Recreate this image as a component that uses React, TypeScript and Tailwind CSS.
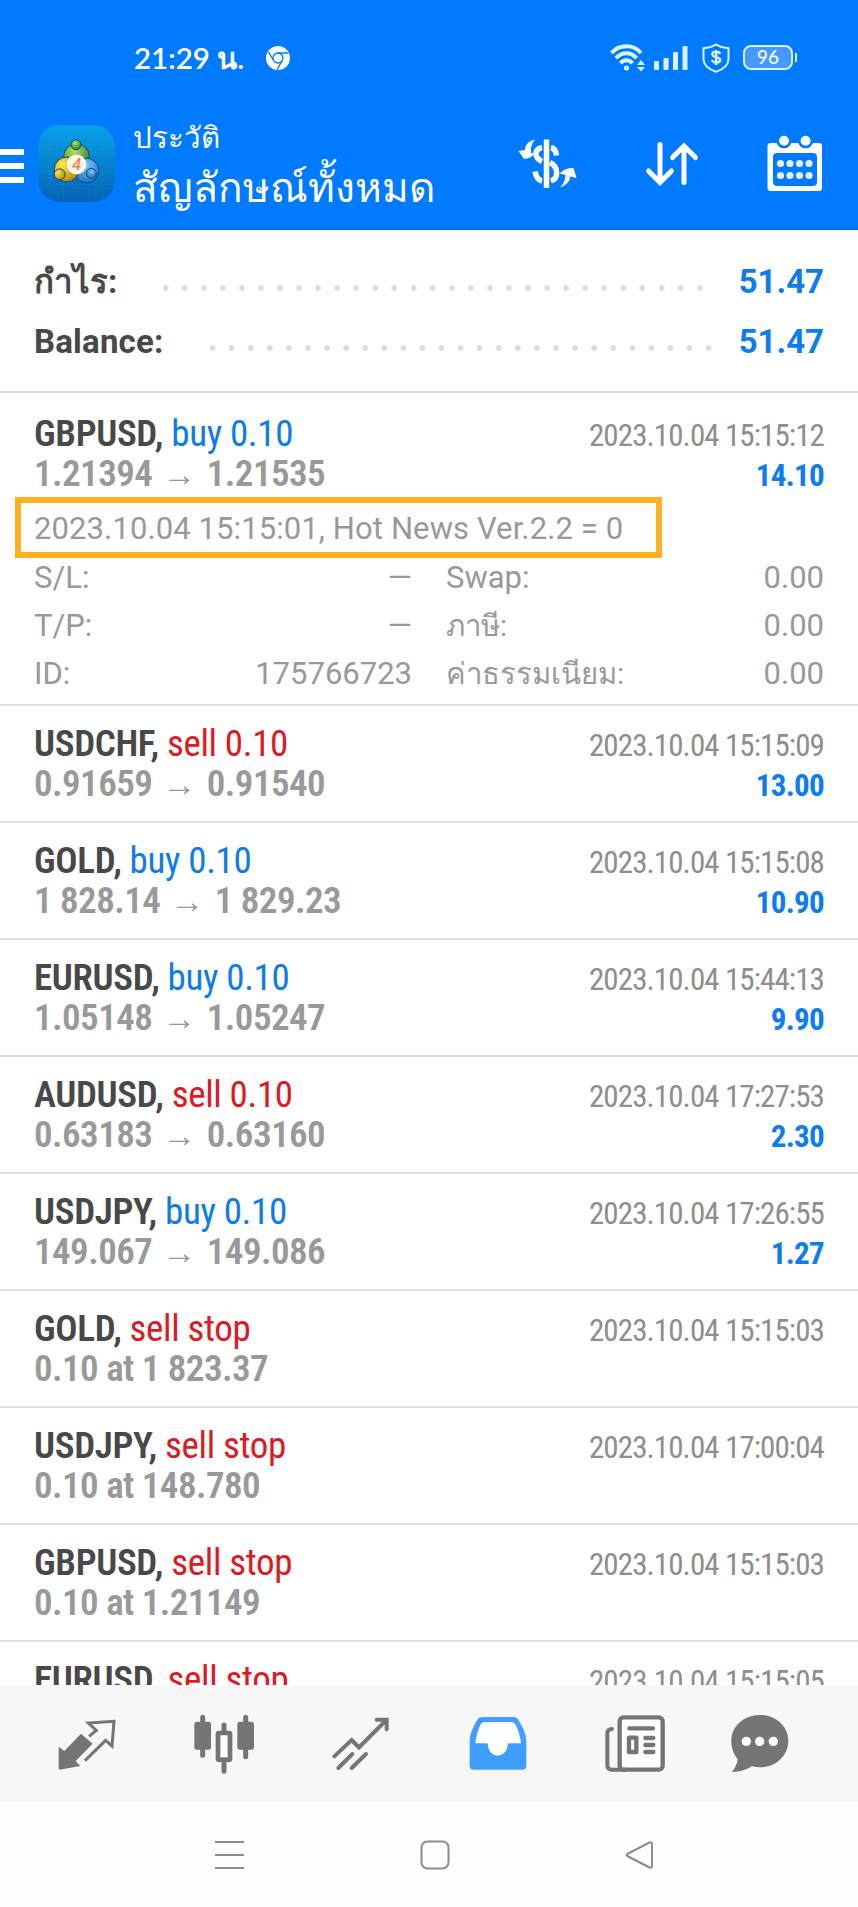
import React from "react";

type Deal = {
  symbol: string;
  side: string;
  sell?: boolean;
  from?: string;
  to?: string;
  time: string;
  profit?: string;
};

const deals: Deal[] = [
  { symbol: "USDCHF", side: "sell 0.10", sell: true, from: "0.91659", to: "0.91540", time: "2023.10.04 15:15:09", profit: "13.00" },
  { symbol: "GOLD", side: "buy 0.10", from: "1 828.14", to: "1 829.23", time: "2023.10.04 15:15:08", profit: "10.90" },
  { symbol: "EURUSD", side: "buy 0.10", from: "1.05148", to: "1.05247", time: "2023.10.04 15:44:13", profit: "9.90" },
  { symbol: "AUDUSD", side: "sell 0.10", sell: true, from: "0.63183", to: "0.63160", time: "2023.10.04 17:27:53", profit: "2.30" },
  { symbol: "USDJPY", side: "buy 0.10", from: "149.067", to: "149.086", time: "2023.10.04 17:26:55", profit: "1.27" },
  { symbol: "GOLD", side: "sell stop", sell: true, from: "0.10 at 1 823.37", time: "2023.10.04 15:15:03" },
  { symbol: "USDJPY", side: "sell stop", sell: true, from: "0.10 at 148.780", time: "2023.10.04 17:00:04" },
  { symbol: "GBPUSD", side: "sell stop", sell: true, from: "0.10 at 1.21149", time: "2023.10.04 15:15:03" },
  { symbol: "EURUSD", side: "sell stop", sell: true, time: "2023.10.04 15:15:05" },
];

const StatusBar = () => (
  <div className="flex h-[115px] items-center pl-[134px] pr-[61px] text-white">
    <span className="w-[110px] pt-0.5 font-['Lato',sans-serif] text-[29.5px] font-semibold whitespace-pre">21:29 น.</span>
    <svg className="ml-[22px]" width="24" height="24" viewBox="0 0 24 24">
      <circle cx="12" cy="12" r="12" fill="#fff" />
      <circle cx="12" cy="12" r="5" fill="#fff" stroke="#007aff" strokeWidth="1.3" />
      <path d="M12 7h10.5M7.7 14.5L2.3 5.6M16.3 14.5L11 23.6" stroke="#007aff" strokeWidth="1.3" />
    </svg>
    <svg className="ml-auto" width="36" height="28" viewBox="0 0 36 28" fill="none" stroke="#d9f4ff" strokeWidth="4">
      <path d="M1.5 9C9 0 24 0 31 9M6 14.2C11.5 7.5 21.5 7.5 26.5 14.2M10.5 19.3C13.5 15.2 19.5 15.2 22.5 19.3" />
      <circle cx="16.5" cy="24" r="2.6" fill="#d9f4ff" stroke="none" />
      <path d="M27 21l4-5 4 5zM27 23h8l-4 4.5z" fill="#d9f4ff" stroke="none" />
    </svg>
    <svg className="ml-2" width="34" height="24" viewBox="0 0 34 24" fill="#d9f4ff">
      <rect x="0" y="15" width="5" height="9" rx="1" />
      <rect x="9.5" y="12" width="5" height="12" rx="1" />
      <rect x="19" y="6" width="5" height="18" rx="1" />
      <rect x="28.5" y="0" width="5" height="24" rx="1" />
    </svg>
    <svg className="ml-3.5" width="28" height="30" viewBox="0 0 28 30" fill="none" stroke="#d9f4ff" strokeWidth="2">
      <path d="M14 1.5C18 4 22 5 26.5 5.3V16c0 6-6 10.5-12.5 12.8C7.5 26.5 1.5 22 1.5 16V5.3C6 5 10 4 14 1.5z" />
      <path d="M18 11c-.8-3-7.6-3-7.6.3 0 3.8 7.8 2 7.8 5.7 0 3.4-7.4 3.4-8.2 0M14.2 7v15" strokeWidth="2.4" />
    </svg>
    <div className="ml-[13px] flex h-[25px] w-[50px] items-center justify-center rounded-lg border-2 border-[#d9f4ff] bg-[#4598ff] font-['Lato',sans-serif] text-[19px] font-semibold text-[#eafaff]">
      96
    </div>
    <div className="ml-0.5 h-[9px] w-0.5 bg-[#d9f4ff]" />
  </div>
);

const AppLogo = () => (
  <svg className="ml-3.5 shrink-0" width="77" height="77" viewBox="0 0 78 78">
    <defs>
      <linearGradient id="tile" x1="0" y1="0" x2="0" y2="1">
        <stop offset="0" stopColor="#0aa0e8" />
        <stop offset="0.5" stopColor="#0583cf" />
        <stop offset="1" stopColor="#0562b4" />
      </linearGradient>
      <radialGradient id="green" cx=".4" cy=".3" r=".8">
        <stop offset="0" stopColor="#b4dc62" />
        <stop offset="1" stopColor="#1f7f28" />
      </radialGradient>
      <radialGradient id="gold" cx=".3" cy=".3" r=".8">
        <stop offset="0" stopColor="#ffe94a" />
        <stop offset="1" stopColor="#b3850c" />
      </radialGradient>
      <radialGradient id="sky" cx=".5" cy=".3" r=".8">
        <stop offset="0" stopColor="#7cc8fb" />
        <stop offset="1" stopColor="#1263b8" />
      </radialGradient>
    </defs>
    <rect width="78" height="78" rx="22" fill="url(#tile)" />
    <path d="M0 20h78M0 30h78M0 48h78M0 60h78M12 0v78M26 0v78M52 0v78M65 0v78" stroke="#2bb4ee" strokeOpacity=".15" />
    <g stroke="#12466b" strokeWidth="1">
      <circle cx="39" cy="32" r="13" fill="url(#green)" />
      <circle cx="49" cy="46" r="12.5" fill="url(#sky)" />
      <circle cx="29" cy="45" r="12.5" fill="url(#gold)" />
      <circle cx="38.5" cy="20" r="5" fill="url(#green)" />
      <circle cx="54" cy="49" r="5" fill="url(#sky)" />
      <circle cx="22" cy="50" r="5.5" fill="url(#gold)" />
    </g>
    <circle cx="39" cy="40" r="10" fill="#fff6ee" />
    <text x="39" y="46" textAnchor="middle" fontSize="17" fontStyle="italic" fontWeight="500" fontFamily="Roboto" fill="#f08a4b">
      4
    </text>
  </svg>
);

const Header = () => (
  <header className="h-[230px] border-b border-[#1558d6] bg-[#007aff]">
    <StatusBar />
    <div className="flex h-[97px] items-center text-white">
      <div className="flex w-6 flex-col gap-2 pt-1">
        <div className="h-[6px] bg-white" />
        <div className="h-[6px] bg-white" />
        <div className="h-[6px] bg-white" />
      </div>
      <AppLogo />
      <div className="ml-[18px] pt-[3px] font-['Roboto',sans-serif] whitespace-nowrap">
        <div className="text-[29.5px] leading-[46px]">ประวัติ</div>
        <div className="text-[40.6px] leading-[55px]">สัญลักษณ์ทั้งหมด</div>
      </div>
      <svg className="ml-auto" width="62" height="54" viewBox="519 137 62 54" fill="none" stroke="#fff" strokeWidth="5.5">
        <path d="M547.5 139.5V188" />
        <path d="M543 147.5C535 149.5 535 157.5 543 161.5M552 147.5C555.5 148.5 557 151 557.5 155.5M551 162.5C560 167 559.5 178.5 552 181M543 181C539 180 537 177 536 171.5" />
        <path
          d="M536 139.5C529 141 526 145.5 526 150L519.5 151l5.5 8c5-.5 8-2 10-5l-3-1.500c-.5-5 1-9.500 4-13zM561 187.5c7-2.5 10-6.5 10-11l6.5 1.5-3-10c-6 0-11 2-13.5 5.5l5.5 1.500c0 5-2 9-5.500 12.500z"
          fill="#fff"
          stroke="none"
        />
      </svg>
      <svg className="ml-[64px]" width="56" height="48" viewBox="644 140 56 48" fill="none" stroke="#fff" strokeWidth="5" strokeLinecap="round">
        <path d="M660 144.5V182M648.5 171l11.5 11.5L671.5 171M684 182.5V146M672.5 157.5l11.5-11.5 11.5 11.5" />
      </svg>
      <svg className="ml-[67px] mr-9" width="55" height="58" viewBox="767 134 55 58">
        <path
          d="M770.5 142h48.5a3 3 0 0 1 3 3v42a3 3 0 0 1-3 3h-48.5a3 3 0 0 1-3-3v-42a3 3 0 0 1 3-3zM777 152a4 4 0 0 0-4 4v25a4 4 0 0 0 4 4h36a4 4 0 0 0 4-4v-25a4 4 0 0 0-4-4z"
          fill="#fff"
          fillRule="evenodd"
        />
        <g fill="#fff" stroke="#007aff" strokeWidth="2.5">
          <circle cx="784" cy="139.8" r="6.3" />
          <circle cx="805.6" cy="139.8" r="6.3" />
        </g>
        <g fill="#e3f1ff">
          {[780.5, 790, 799.5, 809].map((x) => (
            <React.Fragment key={x}>
              <circle cx={x} cy="162.5" r="3.6" />
              <circle cx={x} cy="174.5" r="3.6" />
            </React.Fragment>
          ))}
        </g>
      </svg>
    </div>
  </header>
);

const dots = "h-[6px] bg-[radial-gradient(circle,#dcdcdc_2.5px,transparent_3.1px)] bg-size-[19.08px_6px]";

const Summary = () => (
  <section className="h-[163px] border-b-2 border-[#dedede] px-[34px] pt-[22px] text-[33px] leading-[60px] font-bold text-[#484848]">
    <div className="flex h-[60px] items-center">
      <span className="w-[122px]">กำไร:</span>
      <div className={`${dots} mt-3 w-[553px]`} />
      <span className="ml-auto text-[#0d7cf0]">51.47</span>
    </div>
    <div className="flex h-[60px] items-center">
      <span className="w-[169px] tracking-[0.2px]">Balance:</span>
      <div className={`${dots} mt-3 w-[516px]`} />
      <span className="ml-auto text-[#0d7cf0]">51.47</span>
    </div>
  </section>
);

const DealLines = ({ deal }: { deal: Deal }) => (
  <div className="px-[34px] font-['Roboto_Condensed',sans-serif]">
    <div className="flex h-[40px] items-baseline justify-between leading-[40px]">
      <div className="text-[37px] tracking-[-0.35px]">
        <span className="font-semibold text-[#484848]">{deal.symbol},</span>{" "}
        <span className={deal.sell ? "text-[#dc1a1f]" : "text-[#0d7ce8]"}>{deal.side}</span>
      </div>
      <div className="text-[31px] tracking-[-0.9px] text-[#8e8e8e]">{deal.time}</div>
    </div>
    <div className="flex h-[40px] items-baseline justify-between leading-[40px]">
      <div className="text-[37px] font-semibold tracking-[-0.55px] text-[#999]">
        {deal.from}
        {deal.to && (
          <>
            <span className="mr-[11px] ml-[10px] text-[34px] leading-none">→</span>
            {deal.to}
          </>
        )}
      </div>
      <div className="text-[31px] font-bold tracking-[-0.7px] text-[#0d7cf0]">{deal.profit}</div>
    </div>
  </div>
);

const Detail = ({ label, value, thai }: { label: string; value: string; thai?: boolean }) => (
  <div className="flex h-9 justify-between">
    <span className={thai ? "text-[29.3px]" : ""}>{label}</span>
    <span>{value}</span>
  </div>
);

const OpenDeal = () => (
  <div className="h-[313px] border-b-2 border-[#dedede] pt-[21px] text-[31px] text-[#999]">
    <DealLines
      deal={{ symbol: "GBPUSD", side: "buy 0.10", from: "1.21394", to: "1.21535", time: "2023.10.04 15:15:12", profit: "14.10" }}
    />
    <div className="mt-[3px] ml-[15px] h-[61px] w-[647px] border-[6px] border-[#ffb01f] pl-[13px] leading-[51px] tracking-[0.1px] whitespace-nowrap">
      2023.10.04 15:15:01, Hot News Ver.2.2 = 0
    </div>
    <div className="grid grid-cols-2 gap-x-[34px] gap-y-3 px-[34px] pt-0.5 leading-9">
      <Detail label="S/L:" value="—" />
      <Detail label="Swap:" value="0.00" />
      <Detail label="T/P:" value="—" />
      <Detail label="ภาษี:" value="0.00" thai />
      <Detail label="ID:" value="175766723" />
      <Detail label="ค่าธรรมเนียม:" value="0.00" thai />
    </div>
  </div>
);

const TabBar = () => (
  <nav className="flex h-[117px] items-center gap-[73px] bg-[#f7f7f7] pl-[55px] text-[#757575]">
    <svg className="shrink-0" width="64" height="64" viewBox="166 153 192 192" fill="none" stroke="currentColor" strokeWidth="9">
      <path d="M177 257l17 13 50-52 35 30-51 52 14 15-62 11-3-3z" fill="currentColor" stroke="none" />
      <path d="M268 226l22-18-24-22 77-5-6 74-19-17-62 61" />
    </svg>
    <svg className="shrink-0" width="64" height="64" viewBox="575 153 192 192" fill="currentColor" stroke="currentColor" strokeLinecap="round">
      <path d="M607 169v114M736 169v118M671 192v20M671 300v31" strokeWidth="15" />
      <rect x="582" y="182" width="50" height="84" rx="8" stroke="none" />
      <rect x="711" y="182" width="50" height="84" rx="8" stroke="none" />
      <rect x="653" y="216" width="36" height="80" rx="2" fill="#fff" strokeWidth="14" />
    </svg>
    <svg className="shrink-0" width="64" height="64" viewBox="987 153 192 192" fill="none" stroke="currentColor" strokeWidth="12" strokeLinecap="round">
      <path d="M1003 286l52-49 22 22 82-82M1130 176h30v29M1015 321l42-42M1055 321l43-42" />
    </svg>
    <svg className="shrink-0" width="64" height="64" viewBox="107 153 192 192" fill="#409eff">
      <path d="M158 168h90q12 0 17 10c14 24 23 42 23 64v72q0 12-12 12H130q-12 0-12-12v-72c0-22 9-40 22-64q5-10 18-10z" />
      <path d="M163 183q-9 0-13 9c-9 19-13 34-15 55h34q4 0 4 6c1 17 13 31 29 31s29-14 30-31q0-6 5-6h35c-2-20-7-36-16-55q-4-9-12-9z" fill="#fff" />
    </svg>
    <svg className="shrink-0" width="64" height="64" viewBox="521 153 192 192" fill="none" stroke="currentColor" strokeWidth="13" strokeLinecap="round">
      <rect x="571" y="169" width="129" height="157" rx="12" fill="#fff" />
      <path d="M548 204q-14 0-14 14v94q0 14 14 14h40" strokeWidth="12" />
      <path d="M600 202h71M648 231h24M648 252h24M648 273h24" />
      <rect x="599" y="230" width="22" height="43" rx="1" fill="#fff" />
    </svg>
    <svg className="-ml-3 shrink-0" width="64" height="64" viewBox="898 153 192 192">
      <path d="M994 162c47 0 85 34 85 77 0 45-37 80-85 80-9 0-17-1-25-3-17 12-38 17-60 17 11-12 17-26 18-39-12-14-19-33-19-55 0-43 38-77 86-77z" fill="currentColor" />
      <g fill="#fff">
        <circle cx="953" cy="241" r="14" />
        <circle cx="993" cy="241" r="14" />
        <circle cx="1034" cy="241" r="14" />
      </g>
    </svg>
  </nav>
);

const SystemNav = () => (
  <div className="flex h-[105px] items-center gap-[175px] bg-[#fdfdfd] pl-[215px]">
    <svg width="30" height="30" viewBox="0 0 30 30" stroke="#8c8c8c" strokeWidth="2.2">
      <path d="M0 2h29M0 15h29M0 28h29" />
    </svg>
    <svg width="30" height="30" viewBox="0 0 30 30" fill="none" stroke="#8c8c8c" strokeWidth="2">
      <rect x="1.5" y="1.5" width="27" height="27" rx="6" />
    </svg>
    <svg width="30" height="30" viewBox="0 0 30 30" fill="none" stroke="#8c8c8c" strokeWidth="2" strokeLinejoin="round">
      <path d="M2.3 14Q1 15 2.3 16L24.5 27.5Q27 28.5 27 26V4Q27 1.5 24.5 2.5z" />
    </svg>
  </div>
);

export default function App() {
  return (
    <div className="flex h-[1907px] w-[858px] flex-col overflow-hidden bg-[#fefefe] font-['Roboto',sans-serif]">
      <Header />
      <main className="h-[1455px] overflow-hidden">
        <Summary />
        <OpenDeal />
        {deals.map((deal) => (
          <div key={deal.symbol + deal.time} className="h-[117px] border-b-2 border-[#dedede] pt-[18px]">
            <DealLines deal={deal} />
          </div>
        ))}
      </main>
      <TabBar />
      <SystemNav />
    </div>
  );
}
